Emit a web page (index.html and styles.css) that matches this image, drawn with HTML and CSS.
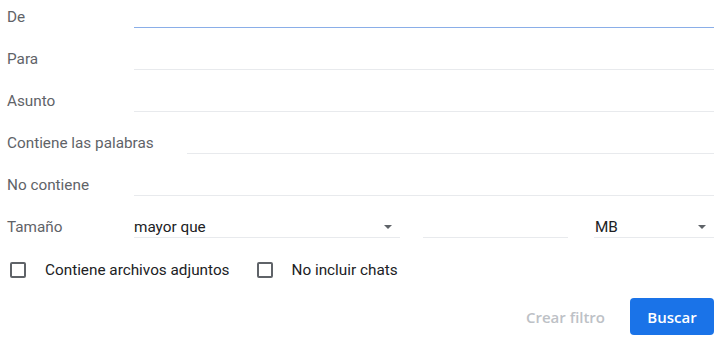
FILE: index.html
```html
<!DOCTYPE html>
<html lang="es">
<head>
<meta charset="utf-8">
<link rel="stylesheet" href="styles.css">
</head>
<body>
<div class="form">
  <div class="row">
    <label class="label">De</label>
    <div class="field focused"></div>
  </div>
  <div class="row">
    <label class="label">Para</label>
    <div class="field"></div>
  </div>
  <div class="row">
    <label class="label">Asunto</label>
    <div class="field"></div>
  </div>
  <div class="row">
    <label class="label wide">Contiene las palabras</label>
    <div class="field"></div>
  </div>
  <div class="row">
    <label class="label">No contiene</label>
    <div class="field"></div>
  </div>
  <div class="row">
    <label class="label">Tamaño</label>
    <div class="size">
      <div class="select sel-cmp"><span class="val">mayor que</span><span class="arrow"></span></div>
      <div class="field num"></div>
      <div class="select sel-unit"><span class="val">MB</span><span class="arrow"></span></div>
    </div>
  </div>
  <div class="checks">
    <div class="check"><span class="box"></span><span class="ctext">Contiene archivos adjuntos</span></div>
    <div class="check"><span class="box"></span><span class="ctext">No incluir chats</span></div>
  </div>
  <div class="actions">
    <span class="create">Crear filtro</span>
    <button class="search">Buscar</button>
  </div>
</div>
</body>
</html>
```
FILE: styles.css
```css
html, body {
  margin: 0;
  padding: 0;
  background: #ffffff;
}
.form {
  width: 720px;
  height: 345px;
  box-sizing: border-box;
  padding: 1px 6px 0 7px;
  font-family: Roboto, "Liberation Sans", sans-serif;
  font-size: 15.3px;
  color: #5f6368;
}
.row {
  display: flex;
  height: 27px;
  margin-bottom: 15px;
}
.label {
  width: 127px;
  flex: none;
  line-height: 20px;
  padding-top: 6px;
  white-space: nowrap;
}
.label.wide {
  width: 180px;
}
.field {
  flex: 1;
  border-bottom: 1px solid #e8eaed;
}
.field.focused {
  border-bottom: none;
  box-shadow: inset 0 -1px 0 #8aaee8;
}
.size {
  flex: 1;
  display: flex;
}
.select {
  display: flex;
  align-items: center;
  border-bottom: 1px solid #e8eaed;
  color: #202124;
  box-sizing: border-box;
  height: 27px;
  padding-top: 6px;
  line-height: 20px;
}
.sel-cmp {
  width: 266px;
}
.field.num {
  flex: none;
  width: 145px;
  margin-left: 23px;
}
.sel-unit {
  width: 120px;
  margin-left: 26px;
  padding-left: 1px;
}
.val {
  flex: 1;
}
.arrow {
  width: 0;
  height: 0;
  border-left: 4px solid transparent;
  border-right: 4px solid transparent;
  border-top: 4px solid #5f6368;
  margin-right: 8px;
  margin-top: -1px;
}
.checks {
  display: flex;
  gap: 27px;
  margin-top: 20px;
  padding-left: 3px;
  height: 24px;
  align-items: center;
  color: #202124;
}
.check {
  display: flex;
  align-items: center;
}
.box {
  width: 12px;
  height: 12px;
  border: 2px solid #5f6368;
  border-radius: 2px;
  margin-right: 19px;
}
.actions {
  display: flex;
  justify-content: flex-end;
  align-items: center;
  margin-top: 16px;
}
.create {
  font-family: "Open Sans", Roboto, sans-serif;
  font-weight: 600;
  font-size: 15px;
  color: #bdc1c6;
  margin-right: 25px;
}
.search {
  width: 84px;
  height: 37px;
  border: none;
  border-radius: 4px;
  background: #1a73e8;
  color: #ffffff;
  font-family: "Open Sans", Roboto, sans-serif;
  font-weight: 600;
  font-size: 15px;
  padding: 0;
}
```
